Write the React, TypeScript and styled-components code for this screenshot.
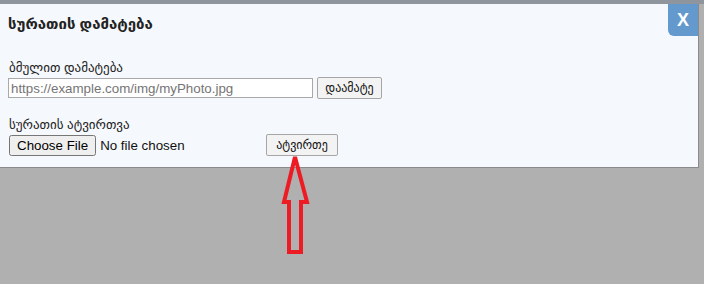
import React from 'react';
import styled, { createGlobalStyle } from 'styled-components';

const GlobalStyle = createGlobalStyle`
  html, body {
    margin: 0;
    padding: 0;
    background: #b0b0b0;
  }
  body {
    font-family: "Liberation Sans", "DejaVu Sans", sans-serif;
  }
`;

const Page = styled.div`
  position: relative;
  width: 704px;
  height: 284px;
  overflow: hidden;
  background: #b0b0b0;
`;

const TopStrip = styled.div`
  height: 4px;
  background: #8e959c;
`;

const Dialog = styled.div`
  width: 698px;
  height: 163px;
  background: #f5f8fc;
  border-right: 1px solid #8a8a8a;
  border-bottom: 1px solid #8a8a8a;
`;

const Header = styled.div`
  display: flex;
  justify-content: space-between;
  align-items: flex-start;
  height: 32px;
`;

const Title = styled.h3`
  margin: 0;
  padding: 11px 0 0 8px;
  font-size: 15px;
  font-weight: bold;
  color: #222;
`;

const CloseButton = styled.button`
  width: 30px;
  height: 32px;
  border: none;
  border-bottom-left-radius: 6px;
  background: #6399cd;
  color: #ffffff;
  font-family: "Liberation Sans", sans-serif;
  font-size: 18px;
  font-weight: bold;
  padding: 0;
  cursor: pointer;
`;

const Body = styled.div`
  padding: 24px 0 0 8px;
`;

const Field = styled.div<{ $gap?: number }>`
  margin-top: ${p => p.$gap ?? 0}px;
`;

const Label = styled.div`
  font-size: 13px;
  line-height: 16px;
  color: #222;
  padding-left: 1px;
  margin-bottom: 1px;
`;

const Row = styled.div`
  display: flex;
  align-items: center;
  gap: 4px;
`;

const UrlInput = styled.input`
  width: 305px;
  height: 20px;
  box-sizing: border-box;
  border: 1px solid #a9a9a9;
  padding: 1px 2px;
  font-family: "Liberation Sans", sans-serif;
  font-size: 13.33px;
  background: #fff;
  &::placeholder {
    color: #757575;
  }
`;

const ActionButton = styled.button<{ $width: number }>`
  width: ${p => p.$width}px;
  height: 22px;
  box-sizing: border-box;
  border: 1px solid #a6a6a6;
  border-radius: 2px;
  background: #f3f3f3;
  font-family: "DejaVu Sans", sans-serif;
  font-size: 12px;
  color: #111;
  padding: 0;
`;

const FileInput = styled.input`
  width: 253px;
  font-family: "Liberation Sans", sans-serif;
  font-size: 13.33px;
  margin-left: 1px;
  color: #111;
`;

const Arrow = styled.svg`
  position: absolute;
  left: 0;
  top: 0;
  pointer-events: none;
`;

export default function App() {
  return (
    <Page>
      <GlobalStyle />
      <TopStrip />
      <Dialog>
        <Header>
          <Title>სურათის დამატება</Title>
          <CloseButton>X</CloseButton>
        </Header>
        <Body>
          <Field>
            <Label>ბმულით დამატება</Label>
            <Row>
              <UrlInput placeholder="https://example.com/img/myPhoto.jpg" />
              <ActionButton $width={65}>დაამატე</ActionButton>
            </Row>
          </Field>
          <Field $gap={18}>
            <Label>სურათის ატვირთვა</Label>
            <Row>
              <FileInput type="file" />
              <ActionButton $width={72}>ატვირთე</ActionButton>
            </Row>
          </Field>
        </Body>
      </Dialog>
      <Arrow width="704" height="284" viewBox="0 0 704 284">
        <polygon
          points="295,157 307,202 301,202 301,252 289,252 289,202 284,202"
          fill="none"
          stroke="#ed1c24"
          strokeWidth="4"
          strokeLinejoin="miter"
        />
      </Arrow>
    </Page>
  );
}
